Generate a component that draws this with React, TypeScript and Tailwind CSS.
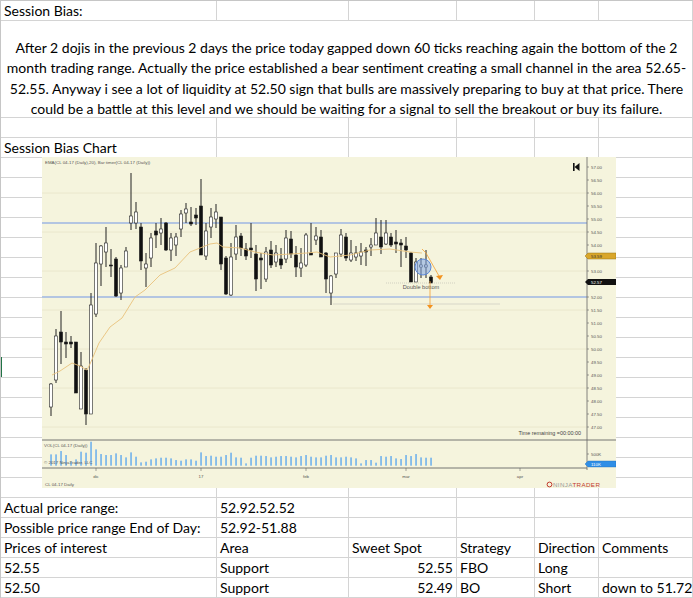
import React from "react";

// [wickTop, wickBottom, bodyTop, bodyBottom, filled]
const candles: number[][] = [
  [383, 416, 384, 407, 0], [329, 383, 336, 380, 0], [311, 364, 332, 342, 1], [332, 358, 342, 344, 1],
  [336, 348, 342, 344, 1], [342, 393, 342, 393, 1], [352, 409, 366, 409, 0], [368, 425, 370, 414, 1],
  [293, 414, 305, 414, 0], [243, 317, 263, 314, 0], [245, 286, 246, 264, 0], [227, 267, 243, 252, 0],
  [249, 277, 265, 266, 1], [257, 297, 259, 296, 1], [265, 300, 268, 293, 0], [247, 267, 251, 267, 0],
  [173, 230, 216, 223, 0], [202, 229, 212, 223, 0], [223, 270, 227, 261, 1], [253, 287, 264, 268, 0],
  [233, 267, 238, 258, 0], [223, 248, 231, 235, 1], [218, 245, 229, 233, 0], [222, 251, 223, 250, 1],
  [233, 261, 238, 250, 0], [233, 256, 237, 245, 0], [210, 237, 214, 229, 0], [203, 223, 209, 213, 0],
  [207, 226, 222, 224, 1], [208, 225, 215, 218, 1], [179, 255, 206, 255, 1], [223, 260, 231, 256, 0],
  [208, 238, 217, 227, 0], [204, 228, 212, 219, 0], [217, 270, 217, 264, 1], [256, 295, 258, 294, 1],
  [243, 296, 257, 295, 0], [225, 260, 237, 254, 0], [233, 256, 236, 248, 1], [243, 260, 249, 256, 1],
  [223, 258, 248, 250, 1], [245, 291, 254, 279, 1], [253, 289, 258, 260, 1], [247, 282, 252, 279, 0],
  [241, 268, 250, 265, 1], [245, 267, 253, 262, 0], [248, 269, 259, 265, 1], [230, 263, 238, 259, 0],
  [231, 258, 239, 254, 1], [246, 277, 255, 267, 1], [248, 277, 263, 268, 0], [233, 267, 235, 265, 0],
  [223, 255, 253, 255, 1], [227, 245, 236, 240, 0], [230, 257, 237, 257, 1], [252, 293, 253, 279, 1],
  [275, 305, 276, 293, 0], [253, 278, 253, 274, 0], [229, 257, 235, 254, 0], [233, 261, 237, 258, 1],
  [240, 262, 253, 260, 0], [246, 261, 253, 257, 0], [243, 265, 252, 256, 0], [247, 266, 250, 252, 1],
  [238, 256, 245, 247, 0], [218, 245, 233, 245, 0], [220, 254, 237, 247, 1], [220, 245, 233, 244, 0],
  [233, 247, 237, 245, 1], [230, 253, 242, 244, 1], [239, 267, 243, 245, 1], [237, 258, 246, 250, 1],
  [252, 282, 253, 282, 1], [258, 282, 262, 282, 0], [258, 278, 265, 267, 0], [250, 278, 265, 267, 0],
  [275, 283, 277, 283, 1],
];

// bar tops measured against a baseline of 437 (3x zoom units)
const volTops = [
  403, 403, 393, 405, 425, 418, 395, 398, 365, 388, 402, 405, 405, 400, 405, 412, 397, 410, 427, 425,
  418, 415, 413, 413, 415, 420, 422, 418, 418, 422, 397, 408, 407, 410, 410, 405, 398, 412, 413, 430,
  413, 407, 407, 408, 412, 410, 408, 408, 410, 412, 408, 405, 410, 412, 412, 407, 405, 412, 412, 410,
  412, 415, 430, 420, 420, 428, 408, 410, 408, 415, 417, 405, 408, 402, 412, 413, 413,
];

const ema =
  "52,375 60,371 72,363 80,366 87,370 90,364 99,343 110,327 122,318 135,297 145,290 160,275 175,268 190,252 200,248 210,244 217,243 223,247 240,248 255,252 273,255 290,254 307,253 317,252 330,257 350,255 370,250 390,249 410,252 422,253";

const priceY = (p: number) => 167 + (57 - p) * 26;
// 53.50 and 52.50 sit under the value markers
const prices = Array.from({ length: 21 }, (_, i) => 57 - i * 0.5);
const hidden = [53.5, 52.5];

const ChartImage: React.FC = () => {
  const small = { fontFamily: "Liberation Sans, Arial, sans-serif", fontSize: 4.4 };
  return (
    <svg
      viewBox="42 157 574 331"
      width={574}
      height={331}
      className="absolute left-[41px] top-[156px]"
    >
      <rect x={42} y={157} width={574} height={331} fill="#f5f4dd" />

      {/* grid */}
      {[193, 232, 271, 310, 349, 388, 427].map((y) => (
        <line key={y} x1={42} x2={587} y1={y} y2={y} stroke="#e7e5c9" strokeWidth={0.8} />
      ))}
      <line x1={42} x2={587} y1={223} y2={223} stroke="#9cb6e2" strokeWidth={1.4} />
      <line x1={42} x2={587} y1={297} y2={297} stroke="#9cb6e2" strokeWidth={1.4} />
      <line x1={333} x2={500} y1={304} y2={304} stroke="#cfcfc4" strokeWidth={0.8} />

      <text x={45} y={164} fill="#555" {...small}>
        EMA(CL 04-17 (Daily),20), Bar timer(CL 04-17 (Daily))
      </text>

      {/* top right icon */}
      <rect x={573} y={163} width={1.6} height={8} fill="#111" />
      <polygon points="579.5,163 574.5,167 579.5,171" fill="#111" />

      {/* candles */}
      {candles.map(([wt, wb, bt, bb, f], i) => {
        const x = 51 + i * 5;
        const h = Math.max(bb - bt, 1);
        return (
          <g key={i}>
            <line x1={x} x2={x} y1={wt} y2={wb} stroke="#222" strokeWidth={1} />
            <rect
              x={x - 1.6}
              y={bt}
              width={3.2}
              height={h}
              fill={f ? "#111" : "#fff"}
              stroke="#222"
              strokeWidth={0.6}
            />
          </g>
        );
      })}

      <polyline points={ema} fill="none" stroke="#e9c27c" strokeWidth={0.9} />

      {/* annotation */}
      <circle cx={423} cy={267} r={8} fill="#7fa6e6" fillOpacity={0.55} stroke="#5a86d6" strokeWidth={1} />
      <line x1={386} x2={455} y1={283} y2={283} stroke="#b9b9b0" strokeWidth={0.6} strokeDasharray="1 1" />
      <text x={421} y={289} textAnchor="middle" fill="#555" fontFamily="Liberation Sans, Arial, sans-serif" fontSize={5.6}>
        Double bottom
      </text>
      <polyline points="422,249 426,253 439,276" fill="none" stroke="#f3a033" strokeWidth={0.8} />
      <polygon points="436,276 443,275 440,280" fill="#f39320" />
      <line x1={430} x2={430} y1={281} y2={306} stroke="#f3a033" strokeWidth={0.8} />
      <polygon points="427,305 433,305 430,309" fill="#f39320" />

      <text x={581} y={435} textAnchor="end" fill="#444" fontFamily="Liberation Sans, Arial, sans-serif" fontSize={5.4}>
        Time remaining =00:00:00
      </text>

      {/* price axis */}
      <line x1={587} x2={587} y1={157} y2={470} stroke="#666" strokeWidth={0.8} />
      {prices.map((p) => (
        <g key={p}>
          <line x1={587} x2={589} y1={priceY(p)} y2={priceY(p)} stroke="#666" strokeWidth={0.6} />
          {!hidden.includes(p) && (
            <text x={591} y={priceY(p) + 1.5} fill="#555" {...small}>
              {p.toFixed(2)}
            </text>
          )}
        </g>
      ))}
      <polygon points="585,256 588,253 616,253 616,259 588,259" fill="#d9a62a" stroke="#9a7414" strokeWidth={0.5} />
      <text x={591} y={257.6} fill="#333" {...small}>53.59</text>
      <polygon points="585,282 588,279 616,279 616,285 588,285" fill="#111" />
      <text x={591} y={283.6} fill="#fff" {...small}>52.57</text>

      {/* volume panel */}
      <line x1={42} x2={616} y1={440} y2={440} stroke="#666" strokeWidth={0.9} />
      {volTops.map((t, i) => {
        const h = (437 - t) / 3;
        return <rect key={i} x={50.2 + i * 5} y={465.7 - h} width={1.7} height={h} fill="#79b6ea" />;
      })}
      <text x={44} y={447} fill="#555" {...small}>VOL(CL 04-17 (Daily))</text>
      <text x={44} y={464} fill="#555" {...small}>© 2017 NinjaTrader, LLC</text>
      <line x1={42} x2={587} y1={468} y2={468} stroke="#666" strokeWidth={0.9} />
      <line x1={587} x2={589} y1={454} y2={454} stroke="#666" strokeWidth={0.6} />
      <text x={591} y={455.5} fill="#555" {...small}>500K</text>
      <polygon points="585,464 588,461 616,461 616,467 588,467" fill="#2f8ee6" stroke="#1f6cb8" strokeWidth={0.4} />
      <text x={591} y={465.6} fill="#fff" {...small}>110K</text>

      {/* time axis */}
      {[
        [96, "dic"],
        [201, "17"],
        [306, "feb"],
        [406, "mar"],
        [520, "apr"],
      ].map(([x, l]) => (
        <g key={l as string}>
          <line x1={x as number} x2={x as number} y1={468} y2={471} stroke="#666" strokeWidth={0.6} />
          <text x={x as number} y={478} textAnchor="middle" fill="#555" {...small}>
            {l}
          </text>
        </g>
      ))}
      <text x={45} y={486} fill="#555" {...small}>CL 04-17 Daily</text>

      {/* logo */}
      <circle cx={549.5} cy={484.5} r={2.4} fill="none" stroke="#c0392b" strokeWidth={1} />
      <text x={553} y={487} fontFamily="Liberation Sans, Arial, sans-serif" fontSize={6.2} letterSpacing={0.4}>
        <tspan fill="#9a9a9a">NINJA</tspan>
        <tspan fill="#c23b2e">TRADER</tspan>
      </text>
    </svg>
  );
};

const cell = "border-r border-b border-[#d4d4d4] px-[3px] flex items-end whitespace-nowrap leading-[19px]";

const Row: React.FC<{ cells?: string[]; right?: number[] }> = ({ cells = [], right = [] }) => (
  <>
    {Array.from({ length: 6 }).map((_, i) => (
      <div key={i} className={`${cell} h-[20px] ${right.includes(i) ? "justify-end" : ""}`}>
        {cells[i] ?? ""}
      </div>
    ))}
  </>
);

export default function App() {
  return (
    <div className="relative w-[693px] h-[598px] overflow-hidden bg-white border-t border-l border-[#c6c6c6] font-['Lato',sans-serif] text-[14px] text-black">
      <div className="grid grid-cols-[216px_132px_108px_78px_64px_94px]">
        <Row cells={["Session Bias:"]} />
        <div className="col-span-6 h-[97px] border-r border-b border-[#d4d4d4] flex flex-col justify-start items-center pt-[17px] leading-[20.4px] whitespace-nowrap">
          <span>After 2 dojis in the previous 2 days the price today gapped down 60 ticks reaching again the bottom of the 2</span>
          <span>month trading range. Actually the price established a bear sentiment creating a small channel in the area 52.65-</span>
          <span>52.55. Anyway i see a lot of liquidity at 52.50 sign that bulls are massively preparing to buy at that price. There</span>
          <span>could be a battle at this level and we should be waiting for a signal to sell the breakout or buy its failure.</span>
        </div>
        <Row />
        <Row cells={["Session Bias Chart"]} />
        {Array.from({ length: 17 }).map((_, i) => (
          <Row key={i} />
        ))}
        <Row cells={["Actual price range:", "52.92.52.52"]} />
        <Row cells={["Possible price range End of Day:", "52.92-51.88"]} />
        <Row cells={["Prices of interest", "Area", "Sweet Spot", "Strategy", "Direction", "Comments"]} />
        <Row cells={["52.55", "Support", "52.55", "FBO", "Long"]} right={[2]} />
        <Row cells={["52.50", "Support", "52.49", "BO", "Short", "down to 51.72"]} right={[2]} />
      </div>
      <ChartImage />
      <div className="absolute left-[-1px] top-[356px] w-[2px] h-[20px] bg-[#217346]" />
    </div>
  );
}
